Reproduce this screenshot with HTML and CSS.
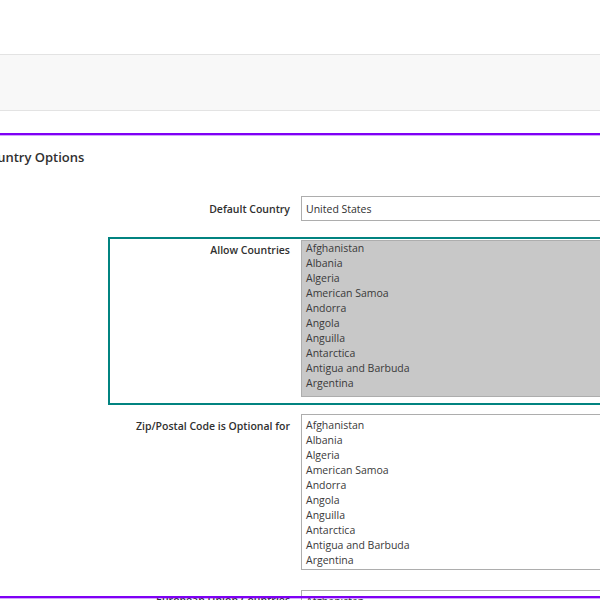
FILE: index.html
```html
<!DOCTYPE html>
<html>
<head>
<meta charset="utf-8">
<link rel="stylesheet" href="styles.css">
</head>
<body>
<div class="page">
  <div class="header-area"></div>
  <div class="page-actions"></div>
  <div class="spacer"></div>
  <section class="fieldset">
    <h2 class="legend">Country Options</h2>
    <div class="rows">
      <div class="row">
        <label class="label label-single">Default Country</label>
        <div class="control"><div class="select">United States</div></div>
      </div>
      <div class="row row-highlight">
        <label class="label">Allow Countries</label>
        <div class="control">
          <div class="listbox listbox-selected">
            <div class="opt">Afghanistan</div>
            <div class="opt">Albania</div>
            <div class="opt">Algeria</div>
            <div class="opt">American Samoa</div>
            <div class="opt">Andorra</div>
            <div class="opt">Angola</div>
            <div class="opt">Anguilla</div>
            <div class="opt">Antarctica</div>
            <div class="opt">Antigua and Barbuda</div>
            <div class="opt">Argentina</div>
          </div>
        </div>
      </div>
      <div class="row row-zip">
        <label class="label">Zip/Postal Code is Optional for</label>
        <div class="control">
          <div class="listbox listbox-plain">
            <div class="opt">Afghanistan</div>
            <div class="opt">Albania</div>
            <div class="opt">Algeria</div>
            <div class="opt">American Samoa</div>
            <div class="opt">Andorra</div>
            <div class="opt">Angola</div>
            <div class="opt">Anguilla</div>
            <div class="opt">Antarctica</div>
            <div class="opt">Antigua and Barbuda</div>
            <div class="opt">Argentina</div>
          </div>
        </div>
      </div>
      <div class="row">
        <label class="label">European Union Countries</label>
        <div class="control">
          <div class="listbox listbox-plain">
            <div class="opt">Afghanistan</div>
            <div class="opt">Albania</div>
            <div class="opt">Algeria</div>
          </div>
        </div>
      </div>
    </div>
  </section>
  <div class="outline-purple"></div>
</div>
</body>
</html>
```
FILE: styles.css
```css
html, body {
  margin: 0;
  padding: 0;
  background: #fff;
  overflow: hidden;
}
body {
  font-family: "Open Sans", "Liberation Sans", sans-serif;
  color: #303030;
  width: 600px;
  height: 600px;
}
.page {
  position: relative;
  width: 600px;
  height: 600px;
  overflow: hidden;
}
.header-area {
  height: 54px;
}
.page-actions {
  height: 55px;
  background: #f8f8f8;
  border-top: 1px solid #e3e3e3;
  border-bottom: 1px solid #e3e3e3;
}
.spacer {
  height: 22px;
}
.fieldset {
  padding-top: 2px;
  width: 760px;
}
.legend {
  margin: 13px 0 0 -19px;
  font-size: 13px;
  font-weight: 600;
  line-height: 18px;
  color: #303030;
}
.rows {
  margin-top: 30px;
  margin-left: 108px;
  display: flex;
  flex-direction: column;
}
.row {
  display: grid;
  grid-template-columns: 182px 1fr;
  column-gap: 11px;
  margin-bottom: 19px;
}
.row-zip {
  margin-bottom: 20px;
}
.row-highlight {
  padding: 3px 0 8px;
  margin-top: -3px;
  margin-bottom: 9px;
  outline: 2px solid #018380;
  outline-offset: -2px;
}
.label {
  text-align: right;
  font-size: 10.5px;
  font-weight: 600;
  line-height: 15px;
  padding-top: 3px;
  color: #303030;
}
.row-zip .label {
  padding-top: 5px;
}
.label-single {
  padding-top: 6px;
}
.select {
  height: 23px;
  border: 1px solid #adadad;
  padding-left: 4px;
  font-size: 10.5px;
  line-height: 24px;
  color: #303030;
}
.listbox {
  border: 1px solid #adadad;
  padding: 0 0 5px;
}
.listbox-plain {
  padding: 3px 0 1px;
}
.listbox-selected {
  background: #c8c8c8;
}
.opt {
  font-size: 10.5px;
  line-height: 15px;
  height: 15px;
  padding-left: 4px;
  color: #3a3a3a;
  white-space: nowrap;
}
.outline-purple {
  position: absolute;
  left: -10px;
  right: -10px;
  top: 133px;
  height: 461px;
  border: 2px solid #7f00f5;
  box-shadow: 0 1px 0 rgba(127, 0, 245, 0.35), inset 0 1px 0 rgba(127, 0, 245, 0.35);
  pointer-events: none;
}
```
